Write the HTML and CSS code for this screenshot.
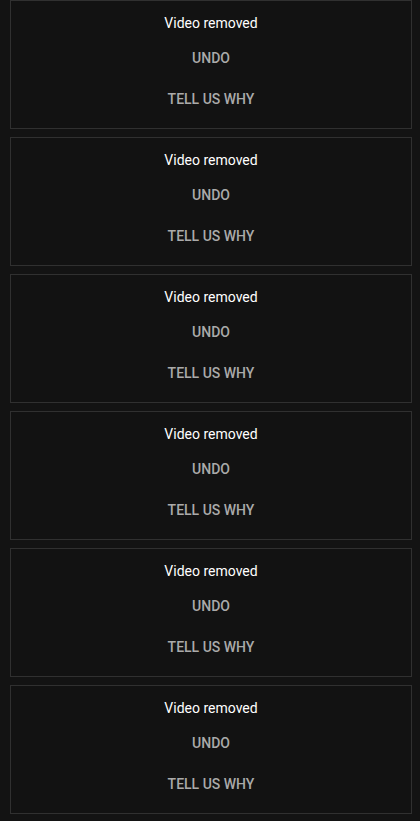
FILE: index.html
```html
<!DOCTYPE html>
<html lang="en">
<head>
<meta charset="utf-8">
<title>Video removed</title>
<link rel="stylesheet" href="styles.css">
</head>
<body>
<div class="list">
  <div class="card">
    <div class="title">Video removed</div>
    <button class="btn btn-undo">UNDO</button>
    <button class="btn btn-why">TELL US WHY</button>
  </div>
  <div class="card">
    <div class="title">Video removed</div>
    <button class="btn btn-undo">UNDO</button>
    <button class="btn btn-why">TELL US WHY</button>
  </div>
  <div class="card">
    <div class="title">Video removed</div>
    <button class="btn btn-undo">UNDO</button>
    <button class="btn btn-why">TELL US WHY</button>
  </div>
  <div class="card">
    <div class="title">Video removed</div>
    <button class="btn btn-undo">UNDO</button>
    <button class="btn btn-why">TELL US WHY</button>
  </div>
  <div class="card">
    <div class="title">Video removed</div>
    <button class="btn btn-undo">UNDO</button>
    <button class="btn btn-why">TELL US WHY</button>
  </div>
  <div class="card">
    <div class="title">Video removed</div>
    <button class="btn btn-undo">UNDO</button>
    <button class="btn btn-why">TELL US WHY</button>
  </div>
</div>
</body>
</html>
```

FILE: styles.css
```css
html, body {
  margin: 0;
  padding: 0;
  background: #131313;
  font-family: Roboto, "Noto Sans", Arial, sans-serif;
}

.list {
  display: flex;
  flex-direction: column;
  gap: 8px;
  padding: 0 8px 8px 10px;
}

.card {
  height: 129px;
  box-sizing: border-box;
  border: 1px solid #303030;
  background: #121212;
  display: flex;
  flex-direction: column;
  align-items: center;
  padding-top: 12px;
}

.title {
  color: #ffffff;
  font-size: 14px;
  line-height: 20px;
}

.btn {
  background: none;
  border: none;
  padding: 0 16px;
  margin: 0;
  font-family: inherit;
  font-size: 14px;
  font-weight: 500;
  line-height: 20px;
  color: #aaaaaa;
  cursor: pointer;
}

.btn-undo {
  margin-top: 15px;
}

.btn-why {
  margin-top: 21px;
}
```
